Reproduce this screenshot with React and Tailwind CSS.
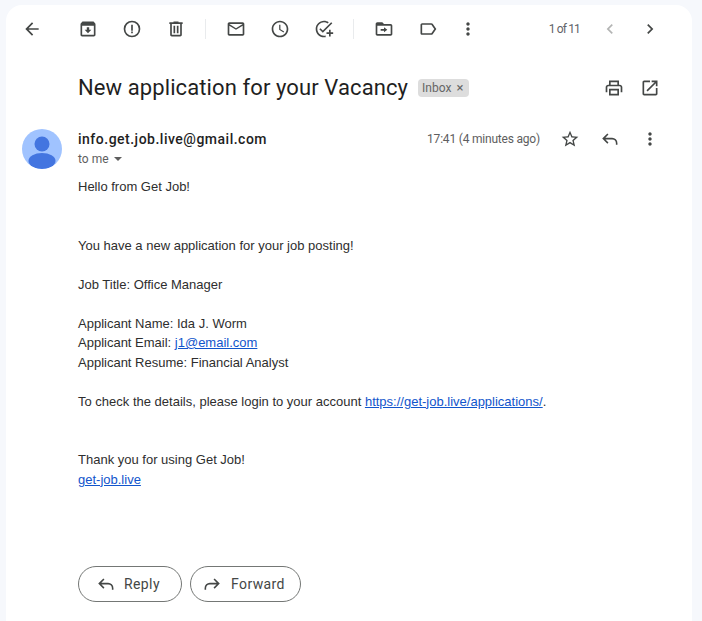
import React from 'react';

const paths = {
  back: 'M20 11H7.83l5.59-5.59L12 4l-8 8 8 8 1.41-1.41L7.83 13H20v-2z',
  archive: 'M20.54 5.23l-1.39-1.68C18.88 3.21 18.47 3 18 3H6c-.47 0-.88.21-1.16.55L3.46 5.23C3.17 5.57 3 6.02 3 6.5V19c0 1.1.9 2 2 2h14c1.1 0 2-.9 2-2V6.5c0-.48-.17-.93-.46-1.27zM5 19V8h14v11H5zm8.45-9h-2.9v3H8l4 4 4-4h-2.55z',
  report: 'M12 2a10 10 0 1 0 0 20 10 10 0 0 0 0-20zm0 18a8 8 0 1 1 0-16 8 8 0 0 1 0 16zM11 7h2v7h-2zM11 15h2v2h-2z',
  trash: 'M15 4V3H9v1H4v2h1v13c0 1.1.9 2 2 2h10c1.1 0 2-.9 2-2V6h1V4h-5zm2 15H7V6h10v13zM9 8h2v9H9zm4 0h2v9h-2z',
  mail: 'M22 6c0-1.1-.9-2-2-2H4c-1.1 0-2 .9-2 2v12c0 1.1.9 2 2 2h16c1.1 0 2-.9 2-2V6zm-2 0l-8 5-8-5h16zm0 12H4V8l8 5 8-5v10z',
  clock: 'M11.99 2C6.47 2 2 6.48 2 12s4.47 10 9.99 10C17.52 22 22 17.52 22 12S17.52 2 11.99 2zM12 20c-4.42 0-8-3.58-8-8s3.58-8 8-8 8 3.58 8 8-3.58 8-8 8zm.5-13H11v6l5.25 3.15.75-1.23-4.5-2.67z',
  task: 'M22 5.18L10.59 16.6l-4.24-4.24 1.41-1.41 2.83 2.83 10-10L22 5.18zM12 20c-4.42 0-8-3.58-8-8s3.58-8 8-8c1.58 0 3.04.46 4.28 1.25l1.44-1.44C16.1 2.67 14.13 2 12 2 6.48 2 2 6.48 2 12s4.48 10 10 10c.7 0 1.38-.07 2-.2v-2.05c-.64.16-1.31.25-2 .25zM20 16v-3h-2v3h-3v2h3v3h2v-3h3v-2h-3z',
  move: 'M20 6h-8l-2-2H4c-1.1 0-2 .9-2 2v12c0 1.1.9 2 2 2h16c1.1 0 2-.9 2-2V8c0-1.1-.9-2-2-2zm0 12H4V8h16v10zm-8-2l4-3-4-3v2H8v2h4v2z',
  label: 'M17.63 5.84C17.27 5.33 16.67 5 16 5L5 5.01C3.9 5.01 3 5.9 3 7v10c0 1.1.9 1.99 2 1.99L16 19c.67 0 1.27-.33 1.63-.84L22 12l-4.37-6.16zM16 17H5V7h11l3.55 5L16 17z',
  more: 'M12 8c1.1 0 2-.9 2-2s-.9-2-2-2-2 .9-2 2 .9 2 2 2zm0 2c-1.1 0-2 .9-2 2s.9 2 2 2 2-.9 2-2-.9-2-2-2zm0 6c-1.1 0-2 .9-2 2s.9 2 2 2 2-.9 2-2-.9-2-2-2z',
  left: 'M15.41 7.41L14 6l-6 6 6 6 1.41-1.41L10.83 12z',
  right: 'M10 6L8.59 7.41 13.17 12l-4.58 4.59L10 18l6-6z',
  print: 'M19 8h-1V3H6v5H5c-1.66 0-3 1.34-3 3v6h4v4h12v-4h4v-6c0-1.66-1.34-3-3-3zM8 5h8v3H8V5zm8 14H8v-4h8v4zm2-2v-4H6v4H4v-6c0-.55.45-1 1-1h14c.55 0 1 .45 1 1v6h-2z',
  open: 'M19 19H5V5h7V3H5c-1.11 0-2 .9-2 2v14c0 1.1.89 2 2 2h14c1.1 0 2-.9 2-2v-7h-2v7zM14 3v2h3.59l-9.83 9.83 1.41 1.41L19 6.41V10h2V3h-7z',
  star: 'M22 9.24l-7.19-.62L12 2 9.19 8.63 2 9.24l5.46 4.73L5.82 21 12 17.27 18.18 21l-1.63-7.03L22 9.24zM12 15.4l-3.76 2.27 1-4.28-3.32-2.88 4.38-.38L12 6.1l1.71 4.04 4.38.38-3.32 2.88 1 4.28L12 15.4z',
};

const Icon = ({ name, className = 'w-5 h-5 text-[#444746]' }) => (
  <svg viewBox="0 0 24 24" fill="currentColor" className={className}>
    <path d={paths[name]} />
  </svg>
);

const ReplyArrow = ({ flip }) => (
  <svg
    viewBox="0 0 24 24"
    fill="none"
    stroke="currentColor"
    strokeWidth="1.9"
    className={flip ? 'w-5 h-5 text-[#444746] -scale-x-100' : 'w-5 h-5 text-[#444746]'}
  >
    <path d="M9.5 6L4 11.5 9.5 17M4 11.5h10.5a5.5 5.5 0 0 1 5.5 5.5v2" />
  </svg>
);

const ToolButton = ({ name, className = 'w-11' }) => (
  <button className={`h-10 flex items-center justify-center ${className}`}>
    <Icon name={name} />
  </button>
);

const Divider = () => <div className="w-px h-5 bg-[#e9ebed] ml-[7px] mr-2" />;

const Toolbar = () => (
  <div className="flex items-center h-12 pl-1.5 pr-[22px]">
    <ToolButton name="back" className="w-10 mr-3.5" />
    <ToolButton name="archive" />
    <ToolButton name="report" />
    <ToolButton name="trash" />
    <Divider />
    <ToolButton name="mail" />
    <ToolButton name="clock" />
    <ToolButton name="task" />
    <Divider />
    <ToolButton name="move" />
    <ToolButton name="label" />
    <ToolButton name="more" className="w-9" />
    <span className="ml-auto mr-2.5 text-xs tracking-[-0.85px] text-[#5f6368]">1 of 11</span>
    <ToolButton name="left" className="w-10 opacity-40" />
    <ToolButton name="right" className="w-10" />
  </div>
);

const Subject = () => (
  <div className="flex items-center h-10 mt-[15px] pl-[72px] pr-[22px]">
    <h1 className="text-[22px] leading-7 tracking-[0.1px] text-[#1f1f1f] font-['Roboto',sans-serif]">
      New application for your Vacancy
    </h1>
    <span className="ml-2.5 flex items-center h-[18px] pl-1 pr-1.5 rounded bg-[#dddddd] text-xs text-[#666666]">
      Inbox <span className="ml-[5px] text-[13px]">×</span>
    </span>
    <div className="ml-auto flex">
      <ToolButton name="print" className="w-8" />
      <ToolButton name="open" className="w-10" />
    </div>
  </div>
);

const Avatar = () => (
  <svg viewBox="0 0 40 40" className="w-10 h-10 shrink-0 rounded-full bg-[#a0c3ff]">
    <circle cx="20" cy="15" r="7.5" fill="#4375e0" />
    <ellipse cx="20" cy="32" rx="13.5" ry="8" fill="#4375e0" />
  </svg>
);

const SenderRow = () => (
  <div className="flex pl-4 pr-[22px] mt-[21px]">
    <Avatar />
    <div className="ml-4 flex-1">
      <div className="flex items-center h-5">
        <span className="text-sm font-medium tracking-[0.5px] text-[#1f1f1f] font-['Roboto',sans-serif]">info.get.job.live@gmail.com</span>
        <span className="ml-auto text-xs tracking-[-0.2px] text-[#5e5e5e]">17:41 (4 minutes ago)</span>
        <div className="flex ml-[10px]">
          <ToolButton name="star" className="w-10 -my-2" />
          <button className="w-10 -my-2 h-10 flex items-center justify-center"><ReplyArrow /></button>
          <ToolButton name="more" className="w-10 -my-2" />
        </div>
      </div>
      <div className="flex items-center h-[19px] text-xs text-[#5e5e5e]">
        to me
        <span className="ml-[5px] w-0 h-0 border-x-4 border-x-transparent border-t-4 border-t-[#5e5e5e]" />
      </div>
    </div>
  </div>
);

const Body = () => (
  <div className="pl-[72px] mt-2 text-[13px] leading-[19.5px] text-[#2e2e2e] font-['Liberation_Sans',Arial,sans-serif]">
    Hello from Get Job!<br /><br /><br />
    You have a new application for your job posting!<br /><br />
    Job Title: Office Manager<br /><br />
    Applicant Name: Ida J. Worm<br />
    Applicant Email: <a href="#" className="text-[#1155cc] underline">j1@email.com</a><br />
    Applicant Resume: Financial Analyst<br /><br />
    To check the details, please login to your account <a href="#" className="text-[#1155cc] underline">https://get-job.live/applications/</a>.<br /><br /><br />
    Thank you for using Get Job!<br />
    <a href="#" className="text-[#1155cc] underline">get-job.live</a>
  </div>
);

const Actions = () => (
  <div className="flex gap-2 pl-[72px] mt-[77px]">
    <button className="flex items-center h-9 w-[104px] pl-[17px] rounded-full border border-[#747775] text-sm tracking-[0.4px] text-[#444746] font-['Roboto',sans-serif]">
      <ReplyArrow /><span className="ml-2">Reply</span>
    </button>
    <button className="flex items-center h-9 w-[111px] pl-[11px] rounded-full border border-[#747775] text-sm tracking-[0.4px] text-[#444746] font-['Roboto',sans-serif]">
      <ReplyArrow flip /><span className="ml-[9px]">Forward</span>
    </button>
  </div>
);

export default function App() {
  return (
    <div className="h-[621px] overflow-hidden bg-[#f6f8fc] pt-[5px] pl-1.5 pr-2.5 font-['Roboto',sans-serif]">
      <div className="h-full bg-white rounded-t-2xl">
        <Toolbar />
        <Subject />
        <SenderRow />
        <Body />
        <Actions />
      </div>
    </div>
  );
}
